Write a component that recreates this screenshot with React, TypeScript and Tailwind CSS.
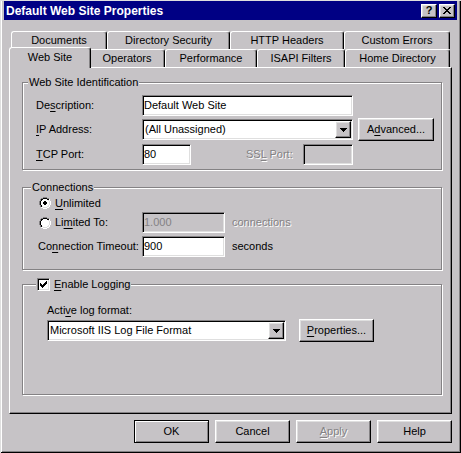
import React from "react";

const raised =
  "border border-t-white border-l-white border-r-black border-b-black shadow-[inset_-1px_-1px_0_#848284,inset_1px_1px_0_#dfdfdf]";
const sunken =
  "border border-t-[#848284] border-l-[#848284] border-r-white border-b-white shadow-[inset_1px_1px_0_#000,inset_-1px_-1px_0_#dfdfdf]";
const etched = "border border-[#848284] shadow-[inset_1px_1px_0_#fff,1px_1px_0_#fff]";
const disabledText = "text-[#848284] [text-shadow:1px_1px_0_#fff]";

// Renders a label where the character after "&" is the keyboard mnemonic.
function Mn({ text }: { text: string }) {
  const i = text.indexOf("&");
  if (i < 0) return <>{text}</>;
  return (
    <>
      {text.slice(0, i)}
      <span className="underline decoration-1 underline-offset-2">{text[i + 1]}</span>
      {text.slice(i + 2)}
    </>
  );
}

// Small bitmap-style glyphs drawn pixel by pixel.
function Pixels({
  rows,
  colors,
}: {
  rows: string[];
  colors: Record<string, string>;
}) {
  const w = rows[0].length;
  const h = rows.length;
  const rects: React.ReactNode[] = [];
  rows.forEach((r, y) =>
    [...r].forEach((c, x) => {
      if (colors[c])
        rects.push(
          <rect key={`${x}-${y}`} x={x} y={y} width={1} height={1} fill={colors[c]} />
        );
    })
  );
  return (
    <svg width={w} height={h} viewBox={`0 0 ${w} ${h}`} shapeRendering="crispEdges" className="block">
      {rects}
    </svg>
  );
}

const ink = { K: "#000" };

const CLOSE_X = [
  "KK....KK",
  ".KK..KK.",
  "..KKKK..",
  "...KK...",
  "..KKKK..",
  ".KK..KK.",
  "KK....KK",
];

const ARROW = ["KKKKKKK", ".KKKKK.", "..KKK..", "...K..."];

const CHECK = [
  "......K",
  ".....KK",
  "K...KKK",
  "KK.KKK.",
  "KKKKK..",
  ".KKK...",
  "..K....",
];

const RADIO = [
  "....DDDD....",
  "..DDKKKKDD..",
  ".DKKFFFFKKW.",
  ".DKFFFFFFLW.",
  "DKFFFFFFFFLW",
  "DKFFFFFFFFLW",
  "DKFFFFFFFFLW",
  "DKFFFFFFFFLW",
  ".DKFFFFFFLW.",
  ".DKLFFFFLLW.",
  "..WWLLLLWW..",
  "....WWWW....",
];

const RADIO_ON = [
  "....DDDD....",
  "..DDKKKKDD..",
  ".DKKFFFFKKW.",
  ".DKFFFFFFLW.",
  "DKFFFOOFFFLW",
  "DKFFOOOOFFLW",
  "DKFFOOOOFFLW",
  "DKFFFOOFFFLW",
  ".DKFFFFFFLW.",
  ".DKLFFFFLLW.",
  "..WWLLLLWW..",
  "....WWWW....",
];

const radioColors = {
  D: "#848284",
  K: "#000",
  W: "#fff",
  L: "#dfdfdf",
  F: "#fff",
  O: "#000",
};

function Radio({ on }: { on?: boolean }) {
  return <Pixels rows={on ? RADIO_ON : RADIO} colors={radioColors} />;
}

function Checkbox() {
  return (
    <div className={`w-[13px] h-[13px] ${sunken} bg-white flex items-center justify-center`}>
      <Pixels rows={CHECK} colors={ink} />
    </div>
  );
}

function Combo({ value, w }: { value: string; w: string }) {
  return (
    <div className={`${w} h-[21px] ${sunken} bg-white flex items-stretch p-[1px]`}>
      <div className="flex-1 flex items-center pl-[1px] whitespace-nowrap">{value}</div>
      <div className={`w-[16px] ${raised} bg-[#c6c3c6] flex items-center justify-center`}>
        <Pixels rows={ARROW} colors={ink} />
      </div>
    </div>
  );
}

function Button({
  label,
  w = "w-[75px]",
  disabled,
  isDefault,
}: {
  label: string;
  w?: string;
  disabled?: boolean;
  isDefault?: boolean;
}) {
  const frame = isDefault
    ? "border border-black shadow-[inset_1px_1px_0_#fff,inset_-1px_-1px_0_#848284]"
    : raised;
  return (
    <div
      className={`${w} h-[23px] shrink-0 ${frame} bg-[#c6c3c6] flex items-center justify-center whitespace-nowrap ${
        disabled ? disabledText : ""
      }`}
    >
      <Mn text={label} />
    </div>
  );
}

function GroupLabel({ left, children }: { left: string; children: React.ReactNode }) {
  return (
    <div
      className={`absolute -top-[7px] ${left} h-[13px] px-[1px] bg-[#c6c3c6] flex items-center gap-[4px] whitespace-nowrap`}
    >
      {children}
    </div>
  );
}

const backTabs = [
  { label: "Documents", w: "w-[96px]" },
  { label: "Directory Security", w: "w-[123px]" },
  { label: "HTTP Headers", w: "w-[114px]" },
  { label: "Custom Errors", w: "w-[106px]" },
];

const frontTabs = [
  { label: "Web Site", w: "w-[82px]", selected: true },
  { label: "Operators", w: "w-[76px]" },
  { label: "Performance", w: "w-[92px]" },
  { label: "ISAPI Filters", w: "w-[88px]" },
  { label: "Home Directory", w: "w-[105px]" },
];

function Tab({ label, w, selected }: { label: string; w: string; selected?: boolean }) {
  const edge =
    "border-t border-l border-r border-t-white border-l-white border-r-black rounded-t-[3px] shadow-[inset_-1px_0_0_#848284] bg-[#c6c3c6] flex items-center justify-center whitespace-nowrap";
  if (selected) {
    return (
      <div className={`relative z-10 ${w} -ml-[2px] -mr-[2px] -mt-[2px] -mb-[1px] h-[21px] pb-[2px] ${edge}`}>
        {label}
      </div>
    );
  }
  return <div className={`${w} h-[18px] ${edge}`}>{label}</div>;
}

export default function App() {
  return (
    <div className="relative w-[461px] h-[453px] overflow-hidden bg-[#c6c3c6] pt-[1px] font-['Liberation_Sans',Arial,sans-serif] text-[11px] leading-none text-black shadow-[inset_0_1px_0_#dfdfdf,inset_1px_0_0_#dfdfdf,inset_-1px_-1px_0_#000,inset_2px_0_0_#fff,inset_-2px_-2px_0_#848284]">
      {/* caption */}
      <div className="mx-[4px] h-[19px] bg-[#000084] flex items-center justify-between pl-[2px] pr-[2px]">
        <span className="text-white font-bold text-[12px]">Default Web Site Properties</span>
        <div className="flex gap-[2px]">
          <div
            className={`w-[16px] h-[14px] ${raised} bg-[#c6c3c6] flex items-center justify-center font-bold text-[11px]`}
          >
            ?
          </div>
          <div className={`w-[16px] h-[14px] ${raised} bg-[#c6c3c6] flex items-center justify-center`}>
            <Pixels rows={CLOSE_X} colors={ink} />
          </div>
        </div>
      </div>

      {/* tab strip */}
      <div className="mt-[11px] pl-[11px]">
        <div className="flex h-[18px]">
          {backTabs.map((t) => (
            <Tab key={t.label} {...t} />
          ))}
        </div>
        <div className="flex h-[18px]">
          {frontTabs.map((t) => (
            <Tab key={t.label} {...t} />
          ))}
        </div>
      </div>

      {/* tab page */}
      <div className="mx-[9px] h-[347px] border border-t-white border-l-white border-r-black border-b-black shadow-[inset_-1px_-1px_0_#848284] pl-[12px] pt-[14px]">
        {/* Web Site Identification */}
        <div className={`relative w-[420px] h-[88px] ${etched} pt-[12px]`}>
          <GroupLabel left="left-[5px]">Web Site Identification</GroupLabel>
          <div className="flex items-center h-[21px] pl-[13px]">
            <span className="w-[106px]">
              <Mn text="De&scription:" />
            </span>
            <div className={`w-[211px] h-[21px] ${sunken} bg-white flex items-center pl-[1px]`}>
              Default Web Site
            </div>
          </div>
          <div className="flex items-center h-[21px] mt-[3px] pl-[13px]">
            <span className="w-[106px]">
              <Mn text="&IP Address:" />
            </span>
            <Combo value="(All Unassigned)" w="w-[211px]" />
            <div className="ml-[5px]">
              <Button label="A&dvanced..." w="w-[76px]" />
            </div>
          </div>
          <div className="flex items-center h-[21px] mt-[4px] pl-[13px]">
            <span className="w-[106px]">
              <Mn text="&TCP Port:" />
            </span>
            <div className={`w-[49px] h-[21px] ${sunken} bg-white flex items-center pl-[1px]`}>80</div>
            <span className={`ml-[55px] w-[57px] ${disabledText}`}>
              <Mn text="SS&L Port:" />
            </span>
            <div className={`w-[50px] h-[21px] ${sunken} bg-[#c6c3c6]`} />
          </div>
        </div>

        {/* Connections */}
        <div className={`relative mt-[17px] w-[420px] h-[83px] ${etched} pt-[6px]`}>
          <GroupLabel left="left-[8px]">Connections</GroupLabel>
          <div className="flex items-center h-[18px] pl-[16px] gap-[4px]">
            <Radio on />
            <span>
              <Mn text="&Unlimited" />
            </span>
          </div>
          <div className="flex items-center h-[21px] pl-[16px]">
            <div className="w-[103px] flex items-center gap-[4px]">
              <Radio />
              <span>
                <Mn text="Li&mited To:" />
              </span>
            </div>
            <div className={`w-[83px] h-[21px] ${sunken} bg-[#c6c3c6] text-[#848284] flex items-center pl-[1px]`}>
              1.000
            </div>
            <span className={`ml-[7px] ${disabledText}`}>connections</span>
          </div>
          <div className="flex items-center h-[21px] mt-[3px] pl-[15px]">
            <span className="w-[104px] whitespace-nowrap">
              <Mn text="Co&nnection Timeout:" />
            </span>
            <div className={`w-[83px] h-[21px] ${sunken} bg-white flex items-center pl-[1px]`}>900</div>
            <span className="ml-[7px]">seconds</span>
          </div>
        </div>

        {/* Logging */}
        <div className={`relative mt-[14px] w-[420px] h-[111px] ${etched} pl-[24px] pt-[19px]`}>
          <GroupLabel left="left-[13px]">
            <Checkbox />
            <span>
              <Mn text="&Enable Logging" />
            </span>
          </GroupLabel>
          <div className="h-[13px] flex items-center">
            <Mn text="Acti&ve log format:" />
          </div>
          <div className="flex items-center h-[21px] mt-[3px]">
            <Combo value="Microsoft IIS Log File Format" w="w-[239px]" />
            <div className="ml-[13px]">
              <Button label="&Properties..." />
            </div>
          </div>
        </div>
      </div>

      {/* dialog buttons */}
      <div className="mt-[6px] mx-[9px] flex justify-end gap-[6px]">
        <Button label="OK" isDefault />
        <Button label="Cancel" />
        <Button label="&Apply" disabled />
        <Button label="Help" />
      </div>
    </div>
  );
}
